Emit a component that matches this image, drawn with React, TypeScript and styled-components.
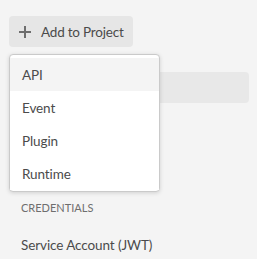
import React, { FC } from 'react';
import styled, { createGlobalStyle } from 'styled-components';

const GlobalStyle = createGlobalStyle`
    html, body {
        margin: 0;
        padding: 0;
        background: #f4f4f4;
        font-family: Lato, "Open Sans", sans-serif;
        color: #4b4b4b;
    }
`;

const Sidebar = styled.div`
    position: relative;
    width: 257px;
    height: 259px;
    padding: 16px 8px 0 9px;
    box-sizing: border-box;
    display: flex;
    flex-direction: column;
`;

const AddButton = styled.button`
    align-self: flex-start;
    display: flex;
    align-items: center;
    gap: 9px;
    width: 124px;
    height: 31px;
    padding: 0 0 0 9px;
    border: none;
    border-radius: 4px;
    background: #e6e6e6;
    color: #4b4b4b;
    font-family: inherit;
    font-size: 13.5px;
    letter-spacing: -0.2px;
    cursor: pointer;
`;

const NavItem = styled.div<{ selected?: boolean }>`
    height: 31px;
    margin-top: 25px;
    border-radius: 4px;
    background: ${p => (p.selected ? '#e8e8e8' : 'transparent')};
`;

const Heading = styled.div`
    margin-top: 98px;
    padding-left: 12px;
    font-size: 11px;
    line-height: 14px;
    color: #6e6e6e;
    text-transform: uppercase;
`;

const Link = styled.div`
    margin-top: 22px;
    padding-left: 12px;
    font-size: 13.5px;
    line-height: 17px;
    letter-spacing: -0.1px;
    color: #4b4b4b;
`;

const Menu = styled.ul`
    position: absolute;
    top: 54px;
    left: 9px;
    width: 151px;
    margin: 0;
    padding: 3px 0 1px;
    list-style: none;
    box-sizing: border-box;
    background: #fff;
    border: 1px solid #cacaca;
    border-radius: 4px;
    box-shadow: 0 1px 4px rgba(0, 0, 0, 0.15);
`;

const MenuItem = styled.li<{ focused?: boolean }>`
    height: 33px;
    display: flex;
    align-items: center;
    padding-left: 12px;
    font-size: 13.5px;
    letter-spacing: -0.1px;
    background: ${p => (p.focused ? '#f4f4f4' : '#fff')};
`;

const PlusIcon: FC = () => (
    <svg width="14" height="14" viewBox="0 0 14 14">
        <path d="M7 1v12M1 7h12" stroke="#6e6e6e" strokeWidth="2" />
    </svg>
);

const items = ['API', 'Event', 'Plugin', 'Runtime'];

const App: FC = () => (
    <>
        <GlobalStyle />
        <Sidebar>
            <AddButton>
                <PlusIcon />
                Add to Project
            </AddButton>
            <NavItem selected />
            <Heading>Credentials</Heading>
            <Link>Service Account (JWT)</Link>
            <Menu>
                {items.map((item, i) =>
                    <MenuItem key={item} focused={i === 0}>{item}</MenuItem>
                )}
            </Menu>
        </Sidebar>
    </>
);

export default App;
